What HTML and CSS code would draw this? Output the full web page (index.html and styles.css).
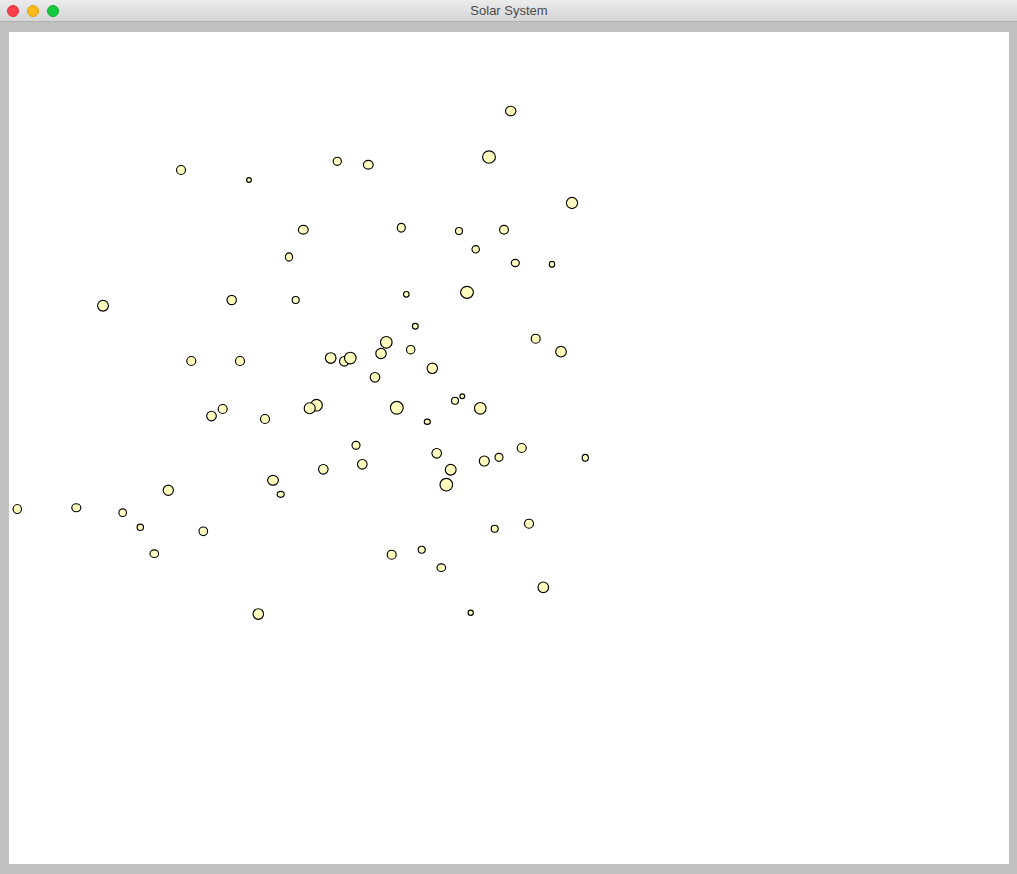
FILE: index.html
```html
<!DOCTYPE html>
<html>
<head>
<meta charset="utf-8">
<title>Solar System</title>
<link rel="stylesheet" href="styles.css">
</head>
<body>
<div class="window">
  <div class="titlebar">
    <div class="lights">
      <span class="light red"></span>
      <span class="light yellow"></span>
      <span class="light green"></span>
    </div>
    <div class="title">Solar System</div>
  </div>
  <div class="content">
    <div class="canvas">
      <svg class="sky" width="1000" height="832" viewBox="9 32 1000 832" xmlns="http://www.w3.org/2000/svg">
        <g class="planets">
          <ellipse cx="510.7" cy="111" rx="5.2" ry="4.8"/>
          <ellipse cx="489" cy="157" rx="6.4" ry="6.2"/>
          <ellipse cx="181" cy="170" rx="4.5" ry="4.5"/>
          <ellipse cx="249" cy="180" rx="2.4" ry="2.4"/>
          <ellipse cx="337.3" cy="161.3" rx="4.1" ry="4.1"/>
          <ellipse cx="368.3" cy="164.7" rx="4.9" ry="4.4"/>
          <ellipse cx="572" cy="203" rx="5.6" ry="5.6"/>
          <ellipse cx="303.3" cy="229.7" rx="4.9" ry="4.4"/>
          <ellipse cx="401.3" cy="227.7" rx="4" ry="4.4"/>
          <ellipse cx="459" cy="231" rx="3.5" ry="3.5"/>
          <ellipse cx="504" cy="229.7" rx="4.4" ry="4.4"/>
          <ellipse cx="475.7" cy="249.3" rx="3.7" ry="3.7"/>
          <ellipse cx="289" cy="257" rx="3.6" ry="4.1"/>
          <ellipse cx="515.3" cy="263" rx="4" ry="3.6"/>
          <ellipse cx="552" cy="264.3" rx="2.7" ry="3"/>
          <ellipse cx="103" cy="305.7" rx="5.4" ry="5.4"/>
          <ellipse cx="231.7" cy="300" rx="4.7" ry="4.7"/>
          <ellipse cx="295.7" cy="300" rx="3.5" ry="3.5"/>
          <ellipse cx="406.3" cy="294.3" rx="2.8" ry="2.8"/>
          <ellipse cx="467" cy="292.3" rx="6.4" ry="6"/>
          <ellipse cx="415.3" cy="326.3" rx="2.9" ry="2.9"/>
          <ellipse cx="386.3" cy="342.3" rx="5.8" ry="5.8"/>
          <ellipse cx="330.7" cy="358" rx="5.3" ry="5.3"/>
          <ellipse cx="344.3" cy="361.3" rx="4.8" ry="4.8"/>
          <ellipse cx="350.3" cy="358" rx="5.8" ry="5.8"/>
          <ellipse cx="381" cy="353.5" rx="5.2" ry="5.2"/>
          <ellipse cx="410.7" cy="349.7" rx="4.2" ry="4.2"/>
          <ellipse cx="535.7" cy="338.7" rx="4.5" ry="4.5"/>
          <ellipse cx="561" cy="351.7" rx="5.3" ry="5.3"/>
          <ellipse cx="191.3" cy="361" rx="4.5" ry="4.5"/>
          <ellipse cx="240" cy="361" rx="4.5" ry="4.5"/>
          <ellipse cx="432.3" cy="368.3" rx="5.2" ry="5.2"/>
          <ellipse cx="375" cy="377.3" rx="4.8" ry="4.8"/>
          <ellipse cx="316.5" cy="405.2" rx="5.8" ry="5.8"/>
          <ellipse cx="309.7" cy="408.2" rx="5.5" ry="5.5"/>
          <ellipse cx="396.8" cy="407.8" rx="6.4" ry="6.4"/>
          <ellipse cx="455" cy="400.7" rx="3.5" ry="3.5"/>
          <ellipse cx="462.3" cy="396.2" rx="2.4" ry="2.4"/>
          <ellipse cx="480.3" cy="408.3" rx="5.8" ry="5.8"/>
          <ellipse cx="427.3" cy="421.7" rx="3" ry="2.6"/>
          <ellipse cx="211.5" cy="416" rx="4.8" ry="4.8"/>
          <ellipse cx="222.7" cy="409" rx="4.5" ry="4.5"/>
          <ellipse cx="265" cy="419" rx="4.5" ry="4.5"/>
          <ellipse cx="356" cy="445.3" rx="4" ry="4"/>
          <ellipse cx="436.7" cy="453.3" rx="4.8" ry="4.8"/>
          <ellipse cx="362.3" cy="464.3" rx="4.8" ry="4.8"/>
          <ellipse cx="323.3" cy="469.3" rx="4.8" ry="4.8"/>
          <ellipse cx="450.7" cy="469.7" rx="5.4" ry="5.4"/>
          <ellipse cx="484.3" cy="461" rx="5" ry="5"/>
          <ellipse cx="499" cy="457.3" rx="4" ry="4"/>
          <ellipse cx="521.7" cy="448" rx="4.5" ry="4.5"/>
          <ellipse cx="585.3" cy="457.7" rx="3.1" ry="3.4"/>
          <ellipse cx="446.3" cy="484.7" rx="6.3" ry="6.3"/>
          <ellipse cx="273" cy="480.3" rx="5.4" ry="4.9"/>
          <ellipse cx="280.7" cy="494.3" rx="3.5" ry="3"/>
          <ellipse cx="168.3" cy="490.3" rx="5.1" ry="5.1"/>
          <ellipse cx="17.3" cy="509" rx="4.2" ry="4.5"/>
          <ellipse cx="76.3" cy="507.7" rx="4.5" ry="4"/>
          <ellipse cx="122.7" cy="512.7" rx="3.8" ry="3.8"/>
          <ellipse cx="140.3" cy="527.3" rx="3.2" ry="3.2"/>
          <ellipse cx="203.3" cy="531.3" rx="4.3" ry="4.3"/>
          <ellipse cx="154.3" cy="553.7" rx="4.3" ry="3.8"/>
          <ellipse cx="494.7" cy="528.7" rx="3.5" ry="3.5"/>
          <ellipse cx="529" cy="523.7" rx="4.5" ry="4.5"/>
          <ellipse cx="391.7" cy="554.7" rx="4.5" ry="4.5"/>
          <ellipse cx="421.7" cy="549.7" rx="3.5" ry="3.5"/>
          <ellipse cx="441.3" cy="567.7" rx="4.3" ry="3.8"/>
          <ellipse cx="543.3" cy="587.3" rx="5.3" ry="5.3"/>
          <ellipse cx="470.7" cy="612.7" rx="2.6" ry="2.6"/>
          <ellipse cx="258.3" cy="614" rx="5.3" ry="5.3"/>
        </g>
      </svg>
    </div>
  </div>
</div>
</body>
</html>
```
FILE: styles.css
```css
html, body {
  margin: 0;
  padding: 0;
  width: 1017px;
  height: 874px;
  overflow: hidden;
  background: #c0c0c0;
}

.window {
  display: flex;
  flex-direction: column;
  width: 1017px;
  height: 874px;
}

.titlebar {
  position: relative;
  height: 21px;
  flex: 0 0 21px;
  background: linear-gradient(to bottom, #ececec, #d5d5d5);
  border-bottom: 1px solid #b1b1b1;
  display: flex;
  align-items: center;
  justify-content: center;
}

.lights {
  position: absolute;
  left: 7px;
  top: 5px;
  display: flex;
  gap: 8px;
}

.light {
  display: block;
  width: 12px;
  height: 12px;
  border-radius: 50%;
  box-sizing: border-box;
}

.red { background: #fc3f4b; border: 1px solid #e2303d; }
.yellow { background: #fdbb1a; border: 1px solid #e0a112; }
.green { background: #14c93c; border: 1px solid #10ad31; }

.title {
  font-family: "Liberation Sans", Arial, sans-serif;
  font-size: 13px;
  color: #4a4a4a;
  line-height: 21px;
  padding-left: 1px;
}

.content {
  flex: 1;
  background: #c0c0c0;
  padding: 10px 8px 10px 9px;
}

.canvas {
  width: 1000px;
  height: 832px;
  background: #ffffff;
}

.sky {
  display: block;
}

.planets ellipse {
  fill: #ffffc0;
  stroke: #000000;
  stroke-width: 1.15;
}
```
